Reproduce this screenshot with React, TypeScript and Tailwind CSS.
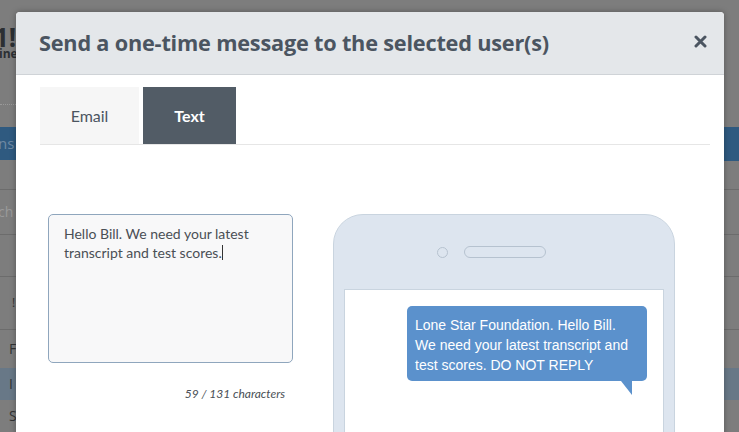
import React from "react";

export default function App() {
  return (
    <div className="relative w-[739px] h-[432px] overflow-hidden bg-[#7d7d7d]" style={{ fontFamily: "'Open Sans', sans-serif" }}>
      {/* background page (dimmed) */}
      <div className="absolute inset-0 flex flex-col">
        <div className="h-[29px]" />
        <div className="text-[26px] font-bold text-[#2b2f33] leading-[19px] -ml-[6px]">1!</div>
        <div className="text-[12px] font-bold text-[#2b2f33] leading-[12px] mt-[1px] -ml-[1px]">ine</div>
        <div className="mt-[44px] border-t border-dotted border-[#999] w-[16px]" />
        <div className="mt-[22px] h-[33px] bg-[#2f5a80] text-[#6f8aa4] text-[15px] leading-[33px] -ml-[2px]">ns</div>
        <div className="mt-[29px] border-t border-[#6c6c6c]" />
        <div className="h-[44px] text-[#9a9a9a] text-[14px] leading-[44px] -ml-[2px]">ch</div>
        <div className="border-t border-[#6c6c6c]" />
        <div className="h-[42px]" />
        <div className="border-t border-[#6c6c6c]" />
        <div className="h-[52px] text-[#333] text-[12px] leading-[52px] pl-[12px]">!</div>
        <div className="border-t border-[#6c6c6c]" />
        <div className="h-[38px] text-[#333] text-[14px] leading-[38px] pl-[9px]">F</div>
        <div className="h-[32px] bg-[#687887] text-[#333] text-[14px] leading-[32px] pl-[9px]">I</div>
        <div className="h-[32px] text-[#333] text-[14px] leading-[32px] pl-[9px]">S</div>
      </div>
      <div className="absolute right-0 top-[128px] w-[15px] h-[33px] bg-[#2f5a80]" />

      {/* modal */}
      <div className="absolute left-[16px] top-[12px] w-[708px] h-[440px] bg-white rounded-[4px] overflow-hidden shadow-[0_0_6px_rgba(0,0,0,0.3)]">
        <div className="h-[63px] bg-[#e4e7ea] border-b border-[#cfd3d7] flex items-center justify-between pl-[23px] pr-[17px]">
          <div className="text-[21.7px] font-bold text-[#4b5561] tracking-[-0.2px]">
            Send a one-time message to the selected user(s)
          </div>
          <svg width="13" height="13" viewBox="0 0 13 13" className="mb-[4px]">
            <path d="M2 2 L11 11 M11 2 L2 11" stroke="#4b5561" strokeWidth="3" strokeLinecap="round" />
          </svg>
        </div>
        <div className="pt-[12px] px-[24px]">
          <div className="flex gap-[4px] border-b border-[#e6e6e6] w-[670px]" style={{ fontFamily: "Lato, sans-serif" }}>
            <div className="w-[99px] h-[57px] bg-[#f6f6f6] flex items-center justify-center text-[16px] text-[#4b5561]">Email</div>
            <div className="w-[93px] h-[57px] bg-[#525c66] flex items-center justify-center text-[16px] font-bold text-white">Text</div>
          </div>
        </div>
        <div className="flex pt-[69px] pl-[32px]">
          <div className="flex flex-col w-[245px]" style={{ fontFamily: "Lato, sans-serif" }}>
            <div className="h-[149px] border border-[#8fa6bd] rounded-[5px] bg-[#f8f8f9] px-[15px] py-[9px] text-[14px] leading-[19px] text-[#4a4f55]">
              Hello Bill. We need your latest transcript and test scores.<span className="inline-block w-[1px] h-[15px] bg-[#333] align-[-2px]" />
            </div>
            <div className="text-right pr-[8px] mt-[22px] text-[12px] italic text-[#4a4f55]">59 / 131 characters</div>
          </div>
          <div className="ml-[40px] w-[342px] h-[260px] bg-[#dde5ef] border border-[#c9d4df] rounded-t-[30px] flex flex-col items-center">
            <div className="flex items-center gap-[16px] mt-[31px] mr-[25px]">
              <div className="w-[11px] h-[11px] rounded-full border border-[#b6c2cf]" />
              <div className="w-[82px] h-[12px] rounded-full border border-[#b6c2cf]" />
            </div>
            <div className="mt-[31px] w-[320px] flex-1 bg-white border-t border-l border-r border-[#c9d4df] flex justify-end pr-[16px] pt-[16px]">
              <div className="relative w-[240px] h-[75px] bg-[#5b91cc] rounded-[5px] px-[8px] pt-[9px] text-[14px] leading-[20px] text-white" style={{ fontFamily: "'Liberation Sans', Arial, sans-serif" }}>
                Lone Star Foundation. Hello Bill. We need your latest transcript and test scores. DO NOT REPLY
                <div className="absolute right-[15px] bottom-[-14px] w-0 h-0 border-l-[11px] border-l-transparent border-t-[14px] border-t-[#5b91cc]" />
              </div>
            </div>
          </div>
        </div>
      </div>
    </div>
  );
}
